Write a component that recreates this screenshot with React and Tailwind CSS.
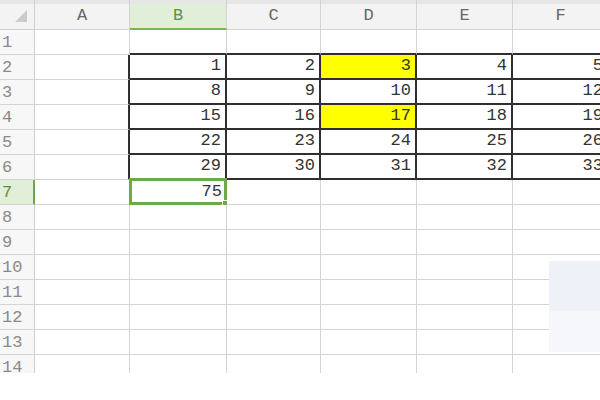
import React from "react";

const cols = [
  { key: "A", w: 95 },
  { key: "B", w: 97 },
  { key: "C", w: 94 },
  { key: "D", w: 96 },
  { key: "E", w: 96 },
  { key: "F", w: 96 },
];

const data = {
  2: [1, 2, 3, 4, 5],
  3: [8, 9, 10, 11, 12],
  4: [15, 16, 17, 18, 19],
  5: [22, 23, 24, 25, 26],
  6: [29, 30, 31, 32, 33],
};

const rows = Array.from({ length: 14 }, (_, i) => i + 1);
const mono = { fontFamily: '"Liberation Mono", "DejaVu Sans Mono", monospace' };

const Cell = ({ row, ci, w }) => {
  const inTable = row >= 2 && row <= 6 && ci >= 1;
  const value = inTable ? data[row][ci - 1] : row === 7 && ci === 1 ? 75 : null;
  const yellow = ci === 3 && (row === 2 || row === 4);
  const selected = row === 7 && ci === 1;

  let cls = "relative h-[25px] shrink-0 flex items-end justify-end pr-[4px] pb-[1px] text-[17px] leading-none text-[#333] ";
  if (inTable) {
    cls += "border-r-2 border-b-2 border-[#2f2f2f] ";
  } else if (row === 1 && ci >= 1) {
    cls += "border-r border-r-[#d4d4d4] border-b-2 border-b-[#2f2f2f] ";
  } else if (ci === 0 && row >= 2 && row <= 6) {
    cls += "border-b border-b-[#d4d4d4] border-r-2 border-r-[#2f2f2f] ";
  } else {
    cls += "border-r border-b border-[#d4d4d4] ";
  }
  cls += yellow ? "bg-[#ffff00]" : "bg-white";

  return (
    <div className={cls} style={{ width: w }}>
      {value !== null && <span className="pb-[3px]">{value}</span>}
      {selected && (
        <div className="absolute -top-[2px] -left-[1px] -right-[1px] -bottom-[1px] border-[3px] border-[#6da84a]">
          <div className="absolute -right-[5px] -bottom-[5px] w-[7px] h-[7px] bg-[#6da84a] border border-white" />
        </div>
      )}
    </div>
  );
};

export default function App() {
  return (
    <div className="w-[600px] h-[400px] bg-white overflow-hidden" style={mono}>
      <div className="relative w-[600px] h-[373px] overflow-hidden">
        {/* column header */}
        <div className="flex h-[30px]">
          <div className="w-[35px] shrink-0 h-[30px] bg-[#f3f3f3] border-r border-b border-[#cfcfcf] shadow-[inset_0_4px_0_#e6e6e6] flex items-center justify-center">
            <svg width="14" height="14" viewBox="0 0 14 14" className="ml-[8px] mt-[3px]">
              <polygon points="13,1 13,13 1,13" fill="#cbcbcb" />
            </svg>
          </div>
          {cols.map((c) => (
            <div
              key={c.key}
              className={
                "shrink-0 h-[30px] flex items-center justify-center text-[17px] pt-[3px] shadow-[inset_0_4px_0_#e6e6e6] " +
                (c.key === "B"
                  ? "bg-[#e1eed8] text-[#5f8f46] border-r border-r-[#d4d4d4] border-b-2 border-b-[#7ab55a]"
                  : "bg-[#f3f3f3] text-[#666] border-r border-b border-[#d4d4d4]")
              }
              style={{ width: c.w }}
            >
              {c.key}
            </div>
          ))}
        </div>

        {/* rows */}
        {rows.map((r) => (
          <div key={r} className="flex">
            <div
              className={
                "w-[35px] shrink-0 h-[25px] flex items-end pl-[2px] pb-[3px] text-[17px] leading-none border-b border-[#d4d4d4] " +
                (r === 7
                  ? "bg-[#e1eed8] text-[#5f8f46] border-r-2 border-r-[#6da84a]"
                  : "bg-[#f7f7f7] text-[#8a8a8a] border-r border-r-[#cfcfcf]")
              }
            >
              {r}
            </div>
            {cols.map((c, ci) => (
              <Cell key={c.key} row={r} ci={ci} w={c.w} />
            ))}
          </div>
        ))}

        {/* faded panel on the right */}
        <div className="absolute left-[549px] top-[261px] w-[51px]">
          <div className="h-[50px] bg-[#eef2f8]" />
          <div className="h-[41px] bg-[#f5f7fa]" />
        </div>
      </div>
    </div>
  );
}
